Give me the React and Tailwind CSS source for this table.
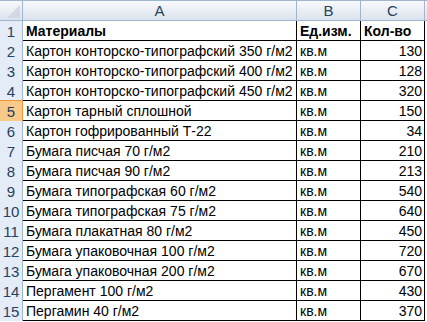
const rows = [
  ['Картон конторско-типографский 350 г/м2', 'кв.м', 130],
  ['Картон конторско-типографский 400 г/м2', 'кв.м', 128],
  ['Картон конторско-типографский 450 г/м2', 'кв.м', 320],
  ['Картон тарный сплошной', 'кв.м', 150],
  ['Картон гофрированный Т-22', 'кв.м', 34],
  ['Бумага писчая 70 г/м2', 'кв.м', 210],
  ['Бумага писчая 90 г/м2', 'кв.м', 213],
  ['Бумага типографская 60 г/м2', 'кв.м', 540],
  ['Бумага типографская 75 г/м2', 'кв.м', 640],
  ['Бумага плакатная 80 г/м2', 'кв.м', 450],
  ['Бумага упаковочная 100 г/м2', 'кв.м', 720],
  ['Бумага упаковочная 200 г/м2', 'кв.м', 670],
  ['Пергамент 100 г/м2', 'кв.м', 430],
  ['Пергамин 40 г/м2', 'кв.м', 370],
];

function RowNum({ n, active }) {
  return (
    <div
      className={`w-[23px] shrink-0 flex items-center justify-center border-r text-[15px] ${
        active
          ? 'bg-[#f8ca8a] border-[#f29436] border-y -my-px text-[#1f3b5c]'
          : 'bg-[#e4ecf7] border-[#9eb6ce] text-[#27415f]'
      }`}
    >
      {n}
    </div>
  );
}

function Row({ n, cells, bold, active }) {
  return (
    <div className="flex h-[20px]">
      <RowNum n={n} active={active} />
      <div className="flex border-b border-black">
        <div className={`w-[274px] border-r border-black pl-[3px] pt-px truncate ${bold ? 'font-bold' : ''}`}>
          {cells[0]}
        </div>
        <div className={`w-[64px] border-r border-black pl-[3px] pt-px ${bold ? 'font-bold' : ''}`}>
          {cells[1]}
        </div>
        <div className={`w-[64px] border-r border-black pt-px ${bold ? 'font-bold pl-[3px]' : 'text-right pr-[2px]'}`}>
          {cells[2]}
        </div>
      </div>
    </div>
  );
}

export default function App() {
  return (
    <div
      className="w-[427px] h-[322px] bg-white overflow-hidden text-[14px] leading-[19px] text-black"
      style={{ fontFamily: '"Liberation Sans", Arial, sans-serif' }}
    >
      <div className="flex h-[21px] border-y border-[#9eb6ce] bg-gradient-to-b from-[#f8f9fb] to-[#dbe3ee] text-[#27415f] text-[15px]">
        <div className="w-[23px] shrink-0 border-r border-[#9eb6ce] relative">
          <svg className="absolute right-[2px] bottom-[2px]" width="13" height="13" viewBox="0 0 13 13">
            <polygon points="13,0 13,13 0,13" fill="#d2d9e3" />
          </svg>
        </div>
        <div className="w-[274px] border-r border-[#9eb6ce] flex items-center justify-center">A</div>
        <div className="w-[64px] border-r border-[#9eb6ce] flex items-center justify-center">B</div>
        <div className="w-[64px] border-r border-[#9eb6ce] flex items-center justify-center">C</div>
      </div>
      <Row n={1} cells={['Материалы', 'Ед.изм.', 'Кол-во']} bold />
      {rows.map((r, i) => (
        <Row key={i} n={i + 2} cells={r} active={i + 2 === 5} />
      ))}
    </div>
  );
}
